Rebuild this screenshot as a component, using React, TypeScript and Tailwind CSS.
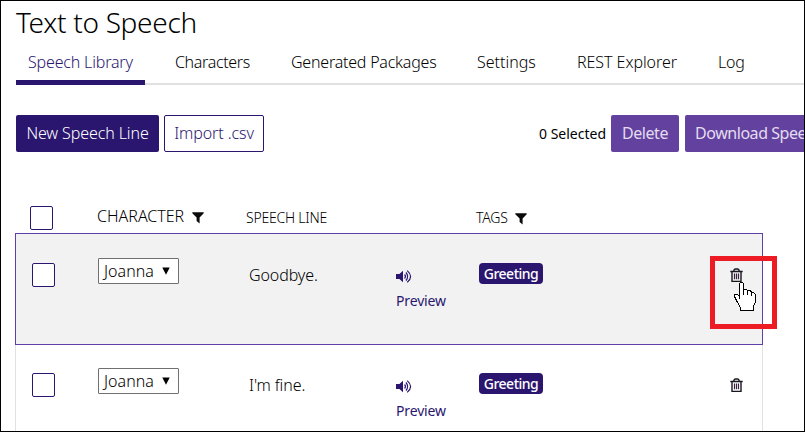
import React from "react";

const tabs = [
  { label: "Speech Library", cell: "w-[129px] pl-[12px] border-b-[5px] border-[#2a166f] text-[#2a166f]", track: "tracking-[-0.17px]" },
  { label: "Characters", cell: "w-[146px] pl-[30px]", track: "tracking-[-0.35px]" },
  { label: "Generated Packages", cell: "w-[186px]", track: "tracking-[-0.22px]" },
  { label: "Settings", cell: "w-[100px]", track: "tracking-[0px]" },
  { label: "REST Explorer", cell: "w-[141px]", track: "tracking-[-0.05px]" },
  { label: "Log", cell: "w-[80px]", track: "tracking-[-0.2px]" },
];

function Funnel() {
  return (
    <svg width="12" height="12" viewBox="0 0 12 12" className="mt-[6px] block shrink-0">
      <path d="M0.3 0.3H11.7V1.2L7.6 5.4V11.4L4.6 9V5.4L0.3 1.2Z" fill="#0a0a0a" />
    </svg>
  );
}

function Speaker() {
  return (
    <svg width="16" height="13" viewBox="0 0 16 13" className="block">
      <path d="M0 4H3.4L7 0.8V12.2L3.4 9H0Z" fill="#2a166f" />
      <path d="M8.6 4.5Q10.4 6.5 8.6 8.5M9.9 2.5Q13.4 6.5 9.9 10.5M11.2 0.6Q18 6.5 11.2 12.4" fill="none" stroke="#2a166f" strokeWidth="1.2" />
    </svg>
  );
}

function Trash() {
  return (
    <svg width="13" height="15" viewBox="0 0 13 15" className="block">
      <path d="M0.3 3.5H12.7M3.9 3.2V2.4Q4.2 1 5.5 1H7.5Q8.8 1 9.1 2.4V3.2M2 3.5V13.4H11V3.5" fill="none" stroke="#16161e" strokeWidth="1.4" />
      <path d="M4.5 5.5V11.3M6.5 5.5V11.3M8.5 5.5V11.3" stroke="#3b2342" strokeWidth="1.2" />
    </svg>
  );
}

function Hand() {
  return (
    <svg width="22" height="30" viewBox="0 0 22 30" className="block" shapeRendering="crispEdges">
      <path d="M5.5 1.5L6.5 0.5H8.5L9.5 1.5V7.5H12.5L13.5 8.5H16.5L17.5 10.5H19.5L21.5 12.5V20.5L19.5 23.5V28.5H6.5V25.5L3.5 20.5L0.5 14.5V12.5H3.5L5.5 14.5Z" fill="white" stroke="black" strokeWidth="1" />
      <path d="M5.5 14V17M9.5 7V13M13.5 8V13M17.5 10V14" stroke="black" strokeWidth="1" />
    </svg>
  );
}

function Box() {
  return <div className="h-[24px] w-[23px] rounded-[2px] border border-[#2a166f] bg-white" />;
}

function Row({ text, className }: { text: string; className: string }) {
  return (
    <div className={`flex w-[748px] shrink-0 items-start border ${className}`}>
      <div className="w-[82px] pt-[29px] pl-[16px]"><Box /></div>
      <div className="w-[151px] pt-[24px]">
        <div className="flex h-[26px] w-[81px] items-center justify-between rounded-[1px] border border-[#707070] bg-white pr-[8px] pl-[5px] text-[16px] text-black">
          <span className="font-light tracking-[0.05px] whitespace-nowrap">Joanna</span>
          <svg width="8" height="8" viewBox="0 0 8 8"><path d="M0.3 0.5H7.7L4 7.8Z" fill="black" /></svg>
        </div>
      </div>
      <div className="w-[147px] pt-[29px] text-[16px] leading-[24px] font-light tracking-[-0.1px] whitespace-nowrap">{text}</div>
      <div className="w-[83px] pt-[36px] text-[#2a166f]">
        <Speaker />
        <div className="mt-[8px] text-[14px] leading-[20px] tracking-[-0.15px]">Preview</div>
      </div>
      <div className="w-[251px] pt-[29px]">
        <div className="flex h-[21px] w-[64px] items-center justify-center rounded-[4px] bg-[#2a166f] text-[14px] font-medium tracking-[-0.5px] text-white">Greeting</div>
      </div>
      <div className="pt-[34px]"><Trash /></div>
    </div>
  );
}

export default function App() {
  return (
    <div className="relative flex h-[432px] w-[805px] flex-col overflow-hidden border border-black bg-white pl-[15px] font-['Noto_Sans','Open_Sans',sans-serif] text-[16px] text-black">
      <h1 className="mt-[2px] h-[40px] shrink-0 text-[28px] leading-[38px] font-light tracking-[-0.3px] whitespace-nowrap">Text to Speech</h1>
      <nav className="flex h-[42px] shrink-0 items-stretch text-[16px] leading-[39px] font-light shadow-[inset_0_-2px_0_#e1e1e1]">
        {tabs.map((t) => (
          <div key={t.label} className={`shrink-0 whitespace-nowrap ${t.cell} ${t.track}`}>{t.label}</div>
        ))}
      </nav>
      <div className="mt-[30px] flex h-[37px] shrink-0 items-center whitespace-nowrap">
        <button className="h-[37px] w-[143px] shrink-0 rounded-[2px] bg-[#2a166f] pb-[1px] font-light tracking-[-0.1px] text-white">New Speech Line</button>
        <button className="ml-[5px] h-[37px] w-[100px] shrink-0 rounded-[2px] border border-[#2a166f] pb-[1px] font-light tracking-[-0.1px] text-[#2a166f]">Import .csv</button>
        <div className="ml-[275px] w-[72px] shrink-0 text-[14px]">0 Selected</div>
        <button className="h-[37px] w-[68px] shrink-0 rounded-[2px] bg-[#63429f] pb-[1px] tracking-[-0.45px] text-[#e3dcf0]">Delete</button>
        <button className="ml-[6px] h-[37px] w-[190px] shrink-0 rounded-[2px] bg-[#63429f] pb-[1px] pl-[10px] text-left tracking-[-0.45px] text-[#e3dcf0]">Download Speech</button>
      </div>
      <div className="mt-[54px] flex h-[27px] shrink-0 items-start font-light whitespace-nowrap">
        <div className="w-[67px] pl-[14px]"><Box /></div>
        <div className="ml-[14px] flex w-[149px] items-start text-[16px] leading-[20px]">
          <span className="w-[95px]">CHARACTER</span><Funnel />
        </div>
        <div className="w-[230px] pt-[1px] text-[14px] leading-[22px] tracking-[-0.22px]">SPEECH LINE</div>
        <div className="flex items-start pt-[1px] text-[14px] leading-[22px] tracking-[-0.2px]">
          <span className="w-[39px]">TAGS</span><Funnel />
        </div>
      </div>
      <Row text="Goodbye." className="relative z-10 -ml-[1px] h-[112px] border-[#5f3fa5] bg-[#f2f2f2]" />
      <Row text="I'm fine." className="-mt-[2px] -ml-[1px] h-[112px] border-[#e1e1e1]" />
      <div className="absolute top-[255px] left-[709px] z-20 h-[73px] w-[67px] border-[5px] border-[#ed1c24]" />
      <div className="absolute top-[281px] left-[733px] z-20"><Hand /></div>
    </div>
  );
}
